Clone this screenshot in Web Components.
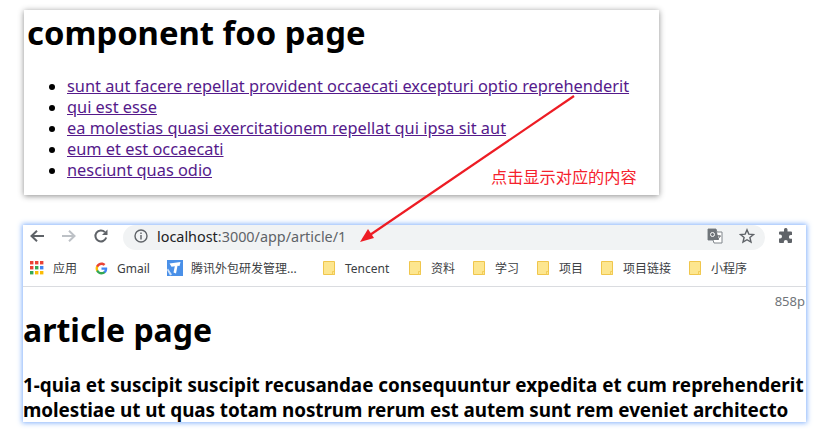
<!DOCTYPE html>
<html><head><meta charset="utf-8">
<style>
html,body{margin:0;padding:0;background:#fff;}
body{width:821px;height:429px;overflow:hidden;position:relative;font-family:"Noto Sans","Noto Sans CJK SC",sans-serif;}
</style></head><body>
<foo-card>
<post-link>sunt aut facere repellat provident occaecati excepturi optio reprehenderit</post-link>
<post-link>qui est esse</post-link>
<post-link>ea molestias quasi exercitationem repellat qui ipsa sit aut</post-link>
<post-link>eum et est occaecati</post-link>
<post-link>nesciunt quas odio</post-link>
</foo-card>
<browser-window></browser-window>
<note-arrow></note-arrow>
<script>
function def(name,html){customElements.define(name,class extends HTMLElement{constructor(){super();this.attachShadow({mode:'open'}).innerHTML=html;}});}
def('foo-card',`<style>
:host{display:block;width:635px;height:185px;margin:10px 0 0 24px;background:#fff;box-shadow:0 1px 6px rgba(0,0,0,.45);box-sizing:border-box;padding:2px 0 0 3px;position:relative}
h1{margin:0;font-size:32.8px;line-height:42px;font-weight:700;color:#000;white-space:nowrap}
ul{margin:22px 0 0;padding:0 0 0 40px;list-style:disc;font-size:16.35px;line-height:21px}
</style><h1>component foo page</h1><ul><slot></slot></ul>`);
def('post-link',`<style>:host{display:list-item;color:#000;white-space:nowrap}span{color:#551a8b;text-decoration:underline}</style><span><slot></slot></span>`);
def('bookmark-item',`<style>
:host{display:flex;align-items:center;font-size:12px;color:#3c4043;white-space:nowrap;height:16px}
::slotted(svg){display:block;flex:none}
</style><slot></slot>`);
const folder=`<svg width="12" height="16" viewBox="0 0 12 16"><path d="M.5 1.500H11.500V14.500H.5Z" fill="#fde68f" stroke="#f0c64c"/><path d="M9.500 11.500h2v3h-2z" fill="#fde68f" stroke="#f0c64c" stroke-width=".8"/></svg>`;
function bm(ml,icon,gap,text,w){return `<bookmark-item style="margin-left:${ml}px">${icon}<span style="margin-left:${gap}px;width:${w}px;display:block">${text}</span></bookmark-item>`}
const apps=`<svg width="14" height="14" viewBox="0 0 14 14">${[['#ea4335','#ea4335','#ea4335'],['#ea4335','#34a853','#4285f4'],['#34a853','#fbbc05','#fbbc05']].map((r,y)=>r.map((c,x)=>`<rect x="${x*5}" y="${y*5}" width="3.4" height="3.4" fill="${c}"/>`).join('')).join('')}</svg>`;
const g=`<svg width="13" height="13" viewBox="0 0 48 48"><path fill="#4285F4" d="M45.100 24.500c0-1.600-.1-3.100-.4-4.500H24v8.500h11.800c-.5 2.800-2 5.100-4.400 6.700v5.500h7.100c4.200-3.800 6.600-9.500 6.600-16.200z"/><path fill="#34A853" d="M24 46c5.900 0 10.900-2 14.500-5.300l-7.100-5.500c-2 1.300-4.500 2.100-7.400 2.100-5.700 0-10.500-3.800-12.300-9H4.400v5.700C8 41.100 15.400 46 24 46z"/><path fill="#FBBC05" d="M11.700 28.300c-.9-2.700-.9-5.900 0-8.600V14H4.400c-3 6-3 14 0 20z"/><path fill="#EA4335" d="M24 10.800c3.200 0 6.100 1.100 8.400 3.300l6.300-6.300C34.900 4.200 29.900 2 24 2 15.400 2 8 6.900 4.400 14l7.300 5.700c1.800-5.100 6.600-8.900 12.300-8.900z"/></svg>`;
const tx=`<svg width="16" height="16" viewBox="0 0 16 16"><rect width="16" height="16" fill="#4a90e8"/><path d="M2.500 3.500L13.500 2L12.500 6L10.500 5.800L9 13.500L6.500 12.500L7.800 6.300L4.500 6.800Z" fill="#fff"/><path d="M1 8.500L5 14.500L3 15.500L0 10Z" fill="#cfe2fa"/></svg>`;
def('browser-window',`<style>
:host{display:block;position:absolute;left:23px;top:225px;width:783px;height:197px;background:#fff;box-shadow:0 0 5px 1px rgba(110,165,250,.85);overflow:hidden}
.tool{display:flex;align-items:center;height:25px;box-sizing:border-box;padding-bottom:3px}
.tool svg{display:block;flex:none}
.omni{margin-left:14px;width:642px;height:25px;box-sizing:border-box;padding-bottom:3px;margin-bottom:-3px;background:#f1f3f4;border-radius:13px;display:flex;align-items:center}
.url{margin-left:9px;font-size:14.4px;color:#5f6368;white-space:nowrap;flex:1}
.url b{font-weight:400;color:#202124}
.bars{display:flex;align-items:center;height:36px;margin-left:7px}
.rule{height:1px;background:#dadce0}
.px{height:19px;font-size:13px;line-height:28px;color:#70757a;white-space:nowrap;display:flex;justify-content:flex-end;padding-right:1px}
h1{margin:3px 0 0;font-size:32px;line-height:42px;font-weight:700;color:#000;white-space:nowrap}
h3{margin:22px 0 0;font-size:18.88px;line-height:24.5px;font-weight:700;color:#000;white-space:nowrap}
h3 span{letter-spacing:-.075px}
</style>
<div class="tool">
<svg style="margin-left:6px" width="16" height="16" viewBox="0 0 16 16"><path d="M15 8H2.500M8 2.800L2.500 8l5.500 5.200" fill="none" stroke="#5f6368" stroke-width="2"/></svg>
<svg style="margin-left:16px" width="16" height="16" viewBox="0 0 16 16"><path d="M1 8h12.500M8 2.800L13.500 8 8 13.200" fill="none" stroke="#bdc1c6" stroke-width="2"/></svg>
<svg style="margin-left:16px" width="16" height="16" viewBox="0 0 16 16"><path d="M13.200 9.500A5.500 5.500 0 1 1 11.900 4.100" fill="none" stroke="#5f6368" stroke-width="2"/><path d="M14.500 1.500V7H9Z" fill="#5f6368"/></svg>
<div class="omni">
<svg style="margin-left:11px" width="14" height="14" viewBox="0 0 14 14"><circle cx="7" cy="7" r="6" fill="none" stroke="#5f6368" stroke-width="1.400"/><path d="M6.300 6h1.400v4.500H6.300zM6.300 3.500h1.400v1.400H6.300z" fill="#5f6368"/></svg>
<div class="url"><b>localhost</b>:3000/app/article/1</div>
<svg width="16" height="16" viewBox="0 0 16 16"><path d="M1 1h8l1 3h5v11H7l-1-3H1z" fill="#fff" stroke="#80868b"/><path d="M1 1h8l3 11H1z" fill="#70757a"/><circle cx="5.500" cy="6.500" r="2" fill="none" stroke="#fff"/><path d="M10 8h4M12 7v1M13 8c-.5 2-2 3-3 3" fill="none" stroke="#5f6368" stroke-width=".9"/></svg>
<svg style="margin:0 10px 0 16px" width="16" height="16" viewBox="0 0 16 16"><path d="M8 1.800l1.800 4.300 4.700.4-3.600 3 1.100 4.600L8 11.700l-4 2.400 1.100-4.600-3.600-3 4.700-.4z" fill="none" stroke="#5f6368" stroke-width="1.400"/></svg>
</div>
<svg style="margin-left:13px" width="16" height="16" viewBox="0 0 16 16"><path d="M6 1.500a1.800 1.800 0 0 1 3.500 0V3.500H13a1 1 0 0 1 1 1V7h-1.200a1.900 1.900 0 0 0 0 3.800H14V14a1 1 0 0 1-1 1H9.800v-1a2 2 0 0 0-4 0v1H2a1 1 0 0 1-1-1v-3.500h1a2 2 0 0 0 0-4H1V4.500a1 1 0 0 1 1-1h4z" fill="#5f6368"/></svg>
</div>
<div class="bars">
${bm(0,apps,9,'应用',24)}${bm(18,g,9,'Gmail',33)}${bm(17,tx,8,'腾讯外包研发管理...',106)}${bm(26,folder,10,'Tencent',46)}${bm(18,folder,10,'资料',24)}${bm(18,folder,10,'学习',24)}${bm(18,folder,10,'项目',24)}${bm(18,folder,10,'项目链接',48)}${bm(18,folder,10,'小程序',36)}
</div>
<div class="rule"></div>
<div class="px"><span>858p</span></div>
<h1>article page</h1>
<h3>1-quia et suscipit suscipit recusandae consequuntur expedita et cum reprehenderit<br><span>molestiae ut ut quas totam nostrum rerum est autem sunt rem eveniet architecto</span></h3>`);
def('note-arrow',`<style>
:host{display:block;position:absolute;left:0;top:0;width:821px;height:429px;pointer-events:none}
svg{position:absolute;left:0;top:0}
span{position:absolute;left:491px;top:166px;font-size:16.200px;line-height:20px;color:#f5222d;white-space:nowrap;font-family:"Noto Sans CJK SC",sans-serif}
</style><svg width="821" height="429"><path d="M574 96L367 237" stroke="#ed1c24" stroke-width="2.200" fill="none"/><path d="M360 242L368 229L374 238Z" fill="#ed1c24"/></svg><span>点击显示对应的内容</span>`);
</script>
</body></html>
